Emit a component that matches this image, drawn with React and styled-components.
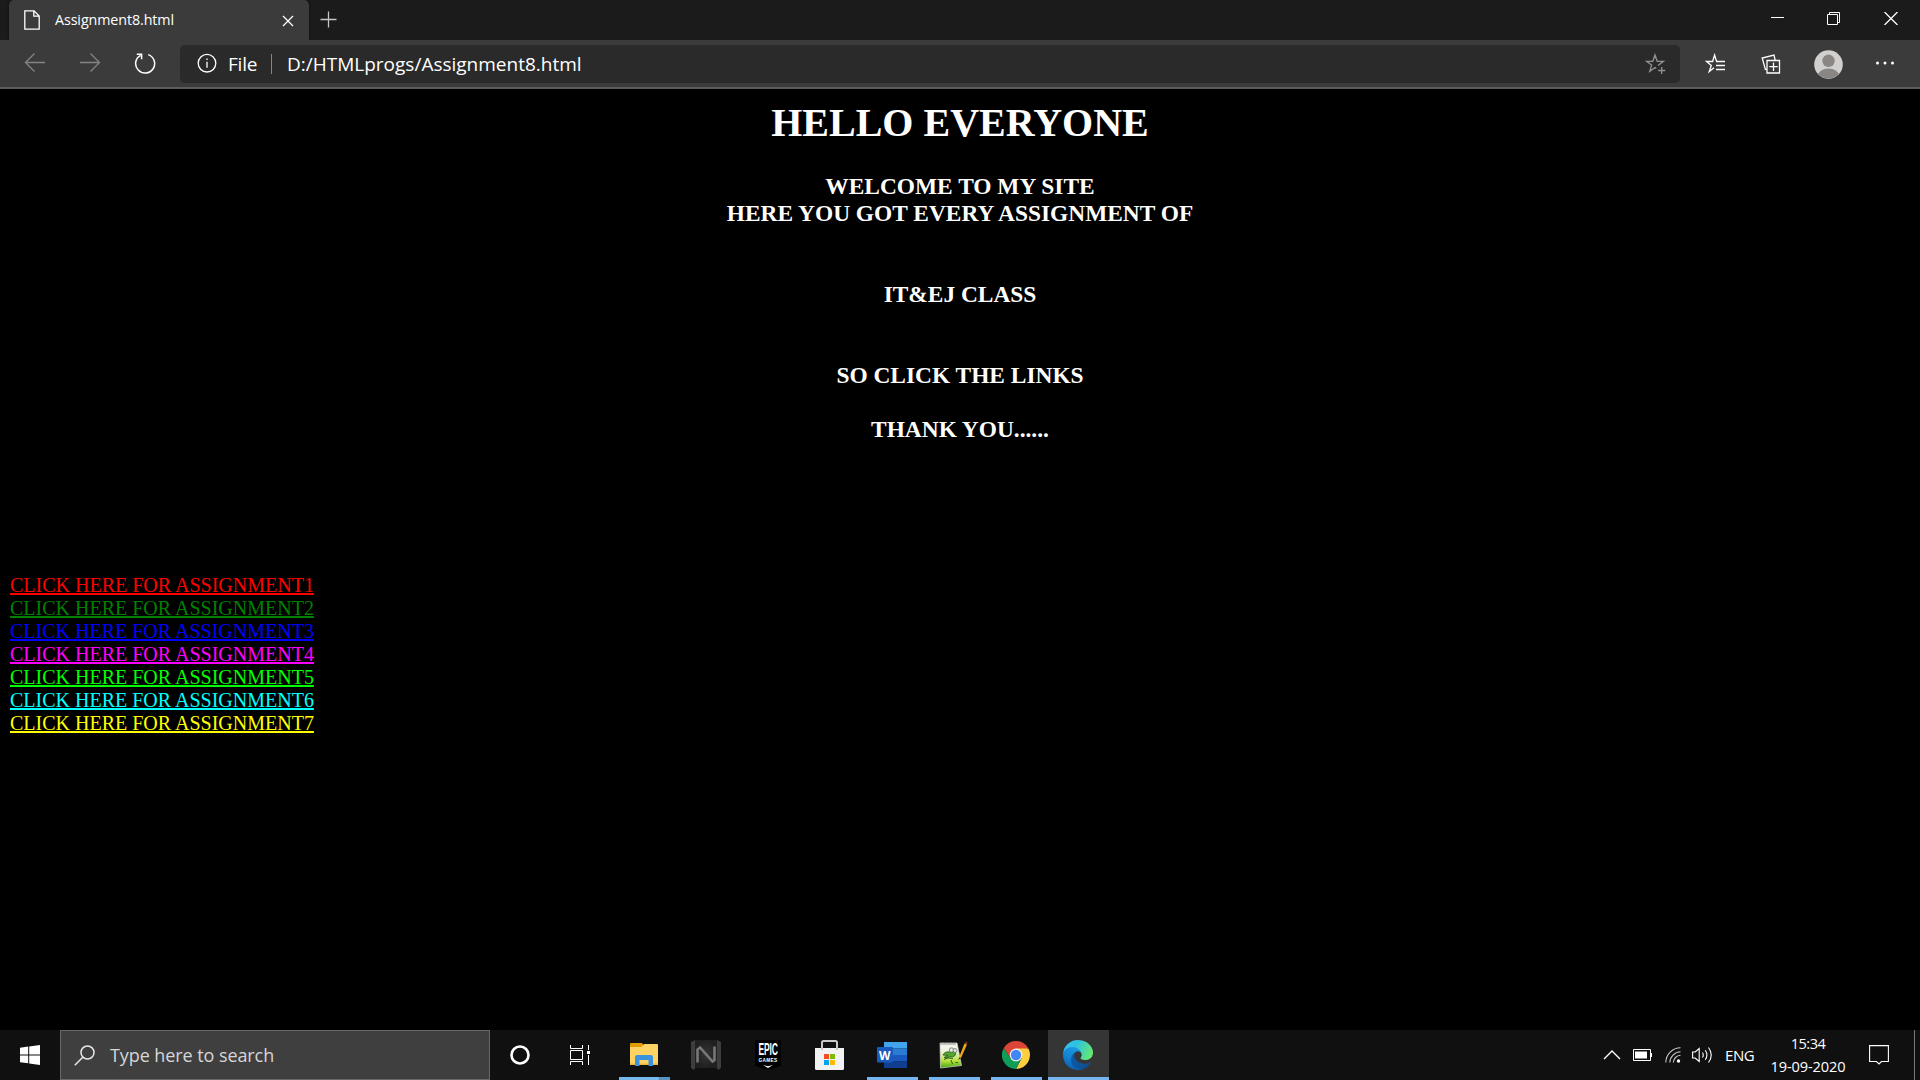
import React from 'react';
import styled, { createGlobalStyle } from 'styled-components';

const ui = '"Open Sans", "Noto Sans", sans-serif';

const GlobalStyle = createGlobalStyle`
  html, body { margin: 0; background: #000; overflow: hidden; }
  *, *::before, *::after { box-sizing: border-box; }
  svg { display: block; flex: none; }
`;

const Screen = styled.div`
  width: 1920px;
  height: 1080px;
  display: flex;
  flex-direction: column;
  background: #000;
  color: #fff;
  font-family: ${ui};
`;

const TabStrip = styled.header`
  height: 40px;
  flex: none;
  display: flex;
  align-items: stretch;
  padding-left: 9px;
  background: #1b1b1b;
`;

const Tab = styled.div`
  width: 300px;
  display: flex;
  align-items: center;
  padding: 0 12px 0 14px;
  border-radius: 5px 5px 0 0;
  background: #3b3b3b;
  box-shadow: 0 0 3px #0c0c0c;
`;

const TabTitle = styled.span`
  flex: 1;
  margin-left: 14px;
  font-size: 14.3px;
  line-height: 40px;
  letter-spacing: -0.1px;
  white-space: nowrap;
`;

const NewTab = styled.button`
  border: 0;
  background: none;
  padding: 0 0 2px 11px;
  display: flex;
  align-items: center;
  color: #c6c6c6;
`;

const WindowButtons = styled.div`
  margin-left: auto;
  display: flex;
  align-items: center;
  gap: 43px;
  padding: 0 22px 3px 0;
`;

const Toolbar = styled.nav`
  height: 49px;
  flex: none;
  display: flex;
  align-items: flex-start;
  padding-top: 5px;
  background: #3b3b3b;
  border-bottom: 2px solid #5c5c5c;
`;

const NavButtons = styled.div`
  width: 180px;
  height: 38px;
  padding-left: 24px;
  display: flex;
  align-items: center;
  gap: 33px;
`;

const AddressBar = styled.div`
  width: 1500px;
  height: 38px;
  display: flex;
  align-items: center;
  padding: 0 14px 0 17px;
  border-radius: 5px;
  background: #2a2a2a;
  font-size: 19px;
  line-height: 38px;
`;

const Scheme = styled.span`
  width: 32px;
  margin-left: 11px;
  letter-spacing: -0.2px;
`;

const Divider = styled.i`
  width: 1px;
  height: 20px;
  margin: 0 15px 0 11px;
  background: #868686;
`;

const Url = styled.span`
  flex: 1;
`;

const ToolButtons = styled.div`
  flex: 1;
  height: 38px;
  display: flex;
  align-items: center;
  padding-left: 25px;
`;

const ToolButton = styled.div`
  margin-right: ${(p) => p.$gap || 0}px;
`;

const Page = styled.main`
  flex: 1;
  font-family: "Liberation Serif", "Times New Roman", serif;
`;

const Heading = styled.h1`
  margin: 0;
  padding-top: 11px;
  font-size: 40px;
  line-height: 46px;
  text-align: center;
`;

const Intro = styled.h3`
  margin: 27px 0 0;
  font-size: 23.4px;
  line-height: 27px;
  text-align: center;
`;

const Line = styled.span`
  display: block;
  margin-bottom: ${(p) => p.$after || 0}px;
`;

const Links = styled.div`
  display: flex;
  flex-direction: column;
  align-items: flex-start;
  padding: 131px 0 0 10px;
`;

const Link = styled.a`
  color: ${(p) => p.$color};
  font-size: 20px;
  line-height: 23px;
  text-decoration: underline;
  text-decoration-thickness: 2px;
  text-underline-offset: 1px;
`;

const Taskbar = styled.footer`
  height: 50px;
  flex: none;
  display: flex;
  background: #101010;
`;

const Start = styled.div`
  width: 60px;
  display: flex;
  align-items: center;
  justify-content: center;
`;

const Search = styled.div`
  width: 430px;
  display: flex;
  align-items: center;
  padding-left: 13px;
  margin-right: 0;
  border: 1px solid #686868;
  background: #3f3f3f;
  color: #d6d6d6;
  font-size: 18px;
  letter-spacing: -0.08px;
`;

const SearchLabel = styled.span`
  margin-left: 15px;
  line-height: 48px;
`;

const AppSlot = styled.div`
  width: ${(p) => p.$width}px;
  margin-left: ${(p) => p.$gap || 0}px;
  display: grid;
  grid-template-rows: 47px 3px;
  justify-items: center;
  align-items: center;
  background: ${(p) => (p.$active ? '#353535' : 'none')};

  & > svg {
    margin-top: 3px;
    margin-right: ${(p) => p.$nudge || 0}px;
  }
`;

const Running = styled.i`
  width: ${(p) => (p.$active ? 61 : 51)}px;
  height: 3px;
  background: ${(p) => (p.$stacked ? 'linear-gradient(90deg, #76b9ed 40px, #4f7ba0 40px, #5b93c4 41px)' : '#76b5f0')};
`;

const Tray = styled.div`
  margin-left: auto;
  display: flex;
  align-items: center;
`;

const TrayItem = styled.div`
  margin-right: ${(p) => p.$gap}px;
`;

const Language = styled.span`
  width: 30px;
  margin-right: 15px;
  font-size: 15px;
  letter-spacing: -0.4px;
`;

const Clock = styled.div`
  width: 76px;
  margin-right: 23px;
  font-size: 14.6px;
  line-height: 23px;
  letter-spacing: -0.1px;
  text-align: center;
  white-space: nowrap;
`;

const Time = styled.div`
  letter-spacing: -0.5px;
`;

const ShowDesktop = styled.i`
  width: 6px;
  height: 50px;
  margin-left: 25px;
  border-left: 1px solid #777;
`;

const Glyph = ({ w, h, children, color = '#fff', sw = 1.3 }) => (
  <svg width={w} height={h} viewBox={`0 0 ${w} ${h}`} fill="none" stroke={color} strokeWidth={sw}>
    {children}
  </svg>
);

const PageIcon = () => (
  <Glyph w={18} h={22}>
    <path d="M1.8 1.8H11L16.2 7V20.2H1.8Z M10.8 2V7.2H16" />
  </Glyph>
);

const StarAdd = () => (
  <Glyph w={21} h={22} color="#929292">
    <path d="M13 12.6L18.5 8.3H12.2L10 2L7.8 8.3H1.5L6.6 12.1L4.7 18.4L10 14.6L11.3 15.5M16.7 14V21M13.2 17.5H20.2" />
  </Glyph>
);

const Favorites = () => (
  <Glyph w={21} h={22}>
    <path d="M9 14.7L4.2 18.500L6.3 12.5L1.5 8.5H7.6L9.6 2L11.6 8.5H20M11 12.5H20M11 16.5H20" />
  </Glyph>
);

const Collections = () => (
  <Glyph w={21} h={22}>
    <path d="M6 7.500H18.500V20H6ZM12.500 9.500V18M8.300 13.700H16.700M5.9 16.6L4.4 16.4L1.2 5L13 2L14.1 7" />
  </Glyph>
);

const Avatar = () => (
  <svg width="29" height="29" viewBox="0 0 29 29">
    <defs><clipPath id="face"><circle cx="14.5" cy="14.5" r="14" /></clipPath></defs>
    <circle cx="14.5" cy="14.5" r="14.3" fill="#d2d0ce" />
    <g clipPath="url(#face)" fill="#8a8683">
      <circle cx="14.5" cy="10.8" r="6.2" />
      <ellipse cx="14.5" cy="26" rx="10.8" ry="7.4" />
    </g>
  </svg>
);

const More = () => (
  <svg width="20" height="6" viewBox="0 0 20 6" fill="#fff">
    <circle cx="2.500" cy="2" r="1.500" />
    <circle cx="10" cy="2" r="1.500" />
    <circle cx="17.500" cy="2" r="1.500" />
  </svg>
);

const Windows = () => (
  <svg width="20" height="20" viewBox="0 0 20 20" fill="#fff">
    <path d="M0 2.8L8.2 1.6V9.4H0ZM9.2 1.5L20 0V9.4H9.2ZM0 10.5H8.2V18.3L0 17.2ZM9.2 10.5H20V20L9.2 18.5Z" />
  </svg>
);

const Explorer = () => (
  <svg width="28" height="24" viewBox="0 0 28 24">
    <path d="M0 1Q0 0 1 0H12L13.5 2V4H0Z" fill="#e09c00" />
    <path d="M0 4H11.5L14 1H27Q28 1 28 2V21.500H0Z" fill="#ffd264" />
    <path d="M0 20.500H28V22H0Z" fill="#edb63b" />
    <path d="M5 23V14Q5 12 7 12H21Q23 12 23 14V23H18.500V17H9.500V23Z" fill="#3a93dc" />
  </svg>
);

const Nox = () => (
  <svg width="30" height="30" viewBox="0 0 30 30">
    <defs><radialGradient id="nx"><stop offset="0" stopColor="#353535" /><stop offset="1" stopColor="#202020" /></radialGradient></defs>
    <path d="M4 0H26V28H4Z" fill="url(#nx)" />
    <path d="M0 2L4 0V28L3 30L0 28ZM30 2L26 0V28L27 30L30 28Z" fill="#3d3d3d" />
    <path d="M6.500 22.500V9.500L9 7.500L21.500 21.500L23.500 20V6.500" fill="none" stroke="#77777a" strokeWidth="2.600" />
  </svg>
);

const EpicMark = styled.div`
  width: 26px;
  height: 30px;
  margin-top: 3px;
  display: flex;
  flex-direction: column;
  align-items: center;
  background: #000;
  color: #fff;
  clip-path: polygon(0 0, 100% 0, 100% 86%, 50% 100%, 0 86%);
  font-family: "Liberation Sans", Arial, sans-serif;
  font-weight: 700;
`;

const EpicName = styled.span`
  height: 17px;
  margin-top: 1px;
  font-size: 11.5px;
  line-height: 17px;
  letter-spacing: -0.2px;
  transform: scale(0.74, 1.5);
`;

const EpicGames = styled.span`
  height: 5px;
  font-size: 4.7px;
  line-height: 5px;
  letter-spacing: 0.35px;
`;

const EpicTip = styled.i`
  width: 10px;
  height: 3px;
  margin-top: 2px;
  background: #fff;
  clip-path: polygon(0 0, 50% 40%, 100% 0, 50% 100%);
`;

const Store = () => (
  <svg width="29" height="30" viewBox="0 0 29 30">
    <path d="M7 9V2.500Q7 1 8.500 1H20.500Q22 1 22 2.500V9" fill="none" stroke="#c9c9c9" strokeWidth="2" />
    <path d="M0 8H29V28.500Q29 30 27.500 30H1.500Q0 30 0 28.500Z" fill="#f2f2f2" />
    <path d="M6 8H8V10H6ZM21 8H23V10H21Z" fill="#c9c9c9" />
    <path d="M9 14H14V19H9Z" fill="#f25022" />
    <path d="M15 14H20V19H15Z" fill="#7fba00" />
    <path d="M9 20H14V25H9Z" fill="#00a4ef" />
    <path d="M15 20H20V25H15Z" fill="#ffb900" />
  </svg>
);

const WordIcon = () => (
  <svg width="30" height="26" viewBox="0 0 30 26">
    <path d="M7 0H30V6.500H7Z" fill="#41a5ee" />
    <path d="M7 6.500H30V13H7Z" fill="#2b7cd3" />
    <path d="M7 13H30V19.500H7Z" fill="#185abd" />
    <path d="M7 19.500H30V26H7Z" fill="#103f91" />
    <rect x="0" y="5" width="16" height="15.500" rx="1" fill="#185abd" />
    <text x="7.700" y="17.500" textAnchor="middle" fontSize="13" fontWeight="700" textLength="11.500" lengthAdjust="spacingAndGlyphs" fontFamily="Open Sans, sans-serif" fill="#fff">W</text>
  </svg>
);

const NotepadPP = () => (
  <svg width="30" height="28" viewBox="0 0 30 28">
    <defs>
      <linearGradient id="npp" x1="0" y1="0" x2="0" y2="1">
        <stop offset="0" stopColor="#f6f7f2" /><stop offset=".35" stopColor="#eef2dc" />
        <stop offset=".72" stopColor="#b5e03a" /><stop offset="1" stopColor="#3fa510" />
      </linearGradient>
    </defs>
    <path d="M1 2H18L22.500 24.500L1.500 27Z" fill="url(#npp)" stroke="#d9d9d9" strokeWidth=".7" />
    <path d="M2 2V4M4 1V4M6 2V4M8 1V4M10 2V4M12 1V4M14 2V4M16 1V4" stroke="#777" strokeWidth=".8" />
    <path d="M4 14Q6 10 11 11L15 10.500Q18 12 16 14.500Q14 16.500 10 16Q6 18 5 16.500L9 14.500Z" fill="#53a82b" stroke="#24561a" strokeWidth=".8" />
    <circle cx="12.500" cy="9" r="2.200" fill="#e3e9dc" stroke="#666" strokeWidth=".7" />
    <circle cx="16" cy="9.500" r="2" fill="#e3e9dc" stroke="#666" strokeWidth=".7" />
    <path d="M5 18.500L9 17L14 17.500M12 19L13.500 23M16.500 21.500H19" stroke="#25551c" strokeWidth=".9" fill="none" />
    <path d="M19.500 19L20.500 15L25.500 2.500L28 3.500L22.500 16Z" fill="#f0a51c" />
    <path d="M25.500 2.500L26.500 .5L28.700 1.500L28 3.500Z" fill="#7d2e25" />
    <path d="M19.500 19L20.200 16.500L21.800 17Z" fill="#3a2a18" />
  </svg>
);

const Chrome = () => (
  <svg width="28" height="28" viewBox="0 0 48 48">
    <path d="M24 24L3.200 12A24 24 0 0 1 44.800 12Z" fill="#db4437" />
    <path d="M24 13H45.300A24 24 0 0 1 24 48L33.500 29.500Z" fill="#ffcd40" />
    <path d="M3.200 12L14.500 29.500L24 35L33.500 29.500L24 48A24 24 0 0 1 3.200 12Z" fill="#0f9d58" />
    <path d="M24 13A11 11 0 0 0 14.500 29.500L3.200 12Z" fill="#db4437" />
    <circle cx="24" cy="24" r="11" fill="#f1f1f1" />
    <circle cx="24" cy="24" r="8.800" fill="#4285f4" />
  </svg>
);

const Edge = () => (
  <svg width="30" height="30" viewBox="0 0 256 256">
    <defs>
      <linearGradient id="e1" x1=".1" y1=".6" x2="1" y2=".6"><stop offset="0" stopColor="#0c59a4" /><stop offset="1" stopColor="#114a8b" /></linearGradient>
      <linearGradient id="e2" x1=".6" y1="0" x2=".3" y2="1"><stop offset="0" stopColor="#1b9de2" /><stop offset=".5" stopColor="#1383d2" /><stop offset="1" stopColor="#0a5fb5" /></linearGradient>
      <linearGradient id="e3" x1="0" y1=".3" x2="1" y2=".6"><stop offset="0" stopColor="#35c1f1" /><stop offset=".4" stopColor="#2fc2df" /><stop offset="1" stopColor="#66eb6e" /></linearGradient>
    </defs>
    <path fill="url(#e1)" d="M231 190.500c-3.400 1.800-6.900 3.400-10.500 4.700a101 101 0 0 1-35.900 6.500c-47.300 0-88.500-32.500-88.500-74.300a31.500 31.500 0 0 1 16.400-27.300c-42.800 1.800-53.800 46.400-53.800 72.500 0 73.900 68.100 81.400 82.800 81.400 7.900 0 19.800-2.300 27-4.600l1.300-.4a128.300 128.300 0 0 0 66.600-52.800 4 4 0 0 0-5.400-5.700z" />
    <path fill="url(#e2)" d="M105.700 241.400a79.200 79.200 0 0 1-22.700-21.300 80.700 80.700 0 0 1 29.500-120c3.200-1.500 8.500-4.100 15.600-4a32.400 32.400 0 0 1 25.700 13 31.900 31.900 0 0 1 6.300 18.700c0-.2 24.500-79.600-80-79.600-43.900 0-80 41.700-80 78.200a130.200 130.200 0 0 0 12.100 56 128 128 0 0 0 156.400 67 75.500 75.500 0 0 1-62.900-8z" />
    <path fill="url(#e3)" d="M152.300 148.900c-.8 1-3.300 2.500-3.300 5.700 0 2.600 1.700 5.200 4.800 7.300 14.400 10.100 41.700 8.700 41.700 8.700a59.600 59.600 0 0 0 30.400-8.300 61.400 61.400 0 0 0 30.500-53c.3-22.400-8-37.300-11.300-43.900C223.800 23.900 177.700 0 127.600 0A128 128 0 0 0 0 126.200c.5-36.500 36.800-66 80-66 3.500 0 23.500.3 42 10a72.600 72.600 0 0 1 30.900 29.300c6.100 10.600 7.200 24.100 7.200 29.500s-2.700 13.300-7.800 19.900z" />
  </svg>
);

const LINKS = ['#ff0000', '#008000', '#0000ff', '#ff00ff', '#00ff00', '#00ffff', '#ffff00'];

export default function App() {
  return (
    <Screen>
      <GlobalStyle />
      <TabStrip>
        <Tab>
          <PageIcon />
          <TabTitle>Assignment8.html</TabTitle>
          <Glyph w={18} h={18}><path d="M4 5L14 15M14 5L4 15" /></Glyph>
        </Tab>
        <NewTab>
          <Glyph w={17} h={17} color="#c6c6c6"><path d="M8.500 .5V16.500M.5 8.500H16.500" /></Glyph>
        </NewTab>
        <WindowButtons>
          <Glyph w={13} h={13} sw={1}><path d="M0 5.500H13" /></Glyph>
          <Glyph w={14} h={13} sw={1}><path d="M.5 2.500H10.500V12.500H.5ZM2.500 2.500V.5H12.500V10.500H10.500" /></Glyph>
          <Glyph w={14} h={13}><path d="M.5 0L13.500 13M13.500 0L.5 13" /></Glyph>
        </WindowButtons>
      </TabStrip>
      <Toolbar>
        <NavButtons>
          <Glyph w={22} h={22} color="#848484"><path d="M21 9.500H1.500M10.500 .5L1.500 9.500L10.500 18.500" /></Glyph>
          <Glyph w={22} h={22} color="#848484"><path d="M1 9.500H20.500M11.500 .5L20.500 9.500L11.500 18.500" /></Glyph>
          <Glyph w={22} h={22} sw={1.5}><path d="M14.200 1.600A9.500 9.500 0 1 1 6.500 2.300M2.800 1.200H7.600V6.200" /></Glyph>
        </NavButtons>
        <AddressBar>
          <Glyph w={20} h={22}><circle cx="10" cy="10.200" r="8.800" /><path d="M10 8.700V14.700M10 5.500V7.100" /></Glyph>
          <Scheme>File</Scheme>
          <Divider />
          <Url>D:/HTMLprogs/Assignment8.html</Url>
          <StarAdd />
        </AddressBar>
        <ToolButtons>
          <ToolButton $gap={35}><Favorites /></ToolButton>
          <ToolButton $gap={32}><Collections /></ToolButton>
          <ToolButton $gap={32}><Avatar /></ToolButton>
          <ToolButton><More /></ToolButton>
        </ToolButtons>
      </Toolbar>
      <Page>
        <Heading>HELLO EVERYONE</Heading>
        <Intro>
          <Line>WELCOME TO MY SITE</Line>
          <Line $after={54}>HERE YOU GOT EVERY ASSIGNMENT OF</Line>
          <Line $after={54}>IT&amp;EJ CLASS</Line>
          <Line $after={27}>SO CLICK THE LINKS</Line>
          <Line>THANK YOU......</Line>
        </Intro>
        <Links>
          {LINKS.map((c, i) => <Link key={c} $color={c}>CLICK HERE FOR ASSIGNMENT{i + 1}</Link>)}
        </Links>
      </Page>
      <Taskbar>
        <Start><Windows /></Start>
        <Search>
          <Glyph w={21} h={21} sw={1.5} color="#e8e8e8"><circle cx="13.500" cy="7.500" r="6.500" /><path d="M8.800 12.200L.8 20.200" /></Glyph>
          <SearchLabel>Type here to search</SearchLabel>
        </Search>
        <AppSlot $width={60}><Glyph w={20} h={20} sw={2.600}><circle cx="10" cy="10" r="8.500" /></Glyph></AppSlot>
        <AppSlot $width={60}>
          <Glyph w={20} h={20} sw={1}>
            <path d="M.5 0V3.500H12.500V0M.5 5.500H12.500V14.500H.5ZM.5 20V16.500H12.500V20M18.500 0V5M18.500 10V20" />
            <path d="M17 6H20V9H17Z" fill="#fff" stroke="none" />
          </Glyph>
        </AppSlot>
        <AppSlot $width={59} $gap={5} $nudge={1}><Explorer /><Running $stacked /></AppSlot>
        <AppSlot $width={64}><Nox /></AppSlot>
        <AppSlot $width={60}>
          <EpicMark><EpicName>EPIC</EpicName><EpicGames>GAMES</EpicGames><EpicTip /></EpicMark>
        </AppSlot>
        <AppSlot $width={63}><Store /></AppSlot>
        <AppSlot $width={63} $nudge={1}><WordIcon /><Running /></AppSlot>
        <AppSlot $width={61} $nudge={1}><NotepadPP /><Running /></AppSlot>
        <AppSlot $width={63} $nudge={1}><Chrome /><Running /></AppSlot>
        <AppSlot $width={61} $nudge={1} $active><Edge /><Running $active /></AppSlot>
        <Tray>
          <TrayItem $gap={12}><Glyph w={18} h={10} sw={1.400}><path d="M1 9L9 1L17 9" /></Glyph></TrayItem>
          <TrayItem $gap={13}>
            <Glyph w={19} h={12} sw={1}><path d="M.5 .5H17.500V11.500H.5ZM18.500 4V8" /><path d="M2 2.500H14V9.500H2Z" fill="#fff" stroke="none" /></Glyph>
          </TrayItem>
          <TrayItem $gap={11}>
            <Glyph w={16} h={16} sw={1.100} color="#c9c9c9">
              <path d="M.8 15.500A15 15 0 0 1 15.500 .8M4.800 15.500A11 11 0 0 1 15.500 4.800M8.300 15.500A7.500 7.500 0 0 1 15.500 8.300" />
              <circle cx="13.500" cy="14" r="1.700" fill="#fff" stroke="none" />
            </Glyph>
          </TrayItem>
          <TrayItem $gap={12}>
            <Glyph w={21} h={18} sw={1.100}><path d="M.6 6H3.200L7.200 2.500V15.500L3.200 12H.6ZM10.500 6.500Q12 9 10.500 11.500M13.300 4.300Q16.500 9 13.300 13.700M16.500 1.500Q22 9 16.500 16.500" /></Glyph>
          </TrayItem>
          <Language>ENG</Language>
          <Clock><Time>15:34</Time>19-09-2020</Clock>
          <Glyph w={20} h={20} sw={1.100}><path d="M.6 .6H19.400V16.500H12.500L10 19L7.500 16.500H.6Z" /></Glyph>
          <ShowDesktop />
        </Tray>
      </Taskbar>
    </Screen>
  );
}
